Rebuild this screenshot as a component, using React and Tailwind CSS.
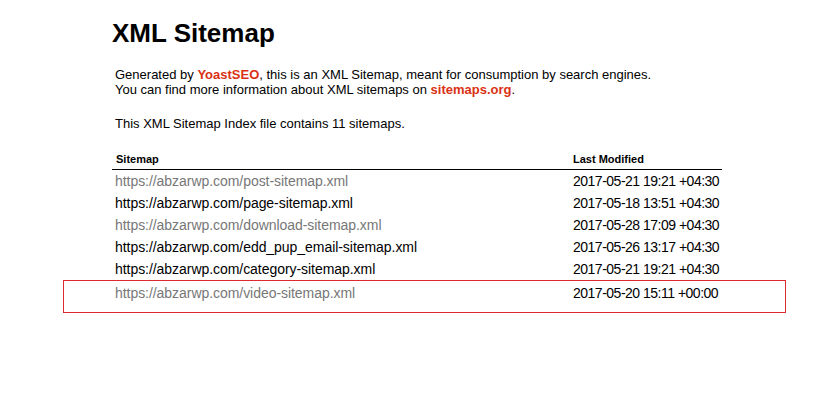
export default function App() {
  const rows = [
    { url: "https://abzarwp.com/post-sitemap.xml", date: "2017-05-21 19:21 +04:30", visited: true },
    { url: "https://abzarwp.com/page-sitemap.xml", date: "2017-05-18 13:51 +04:30", visited: false },
    { url: "https://abzarwp.com/download-sitemap.xml", date: "2017-05-28 17:09 +04:30", visited: true },
    { url: "https://abzarwp.com/edd_pup_email-sitemap.xml", date: "2017-05-26 13:17 +04:30", visited: false },
    { url: "https://abzarwp.com/category-sitemap.xml", date: "2017-05-21 19:21 +04:30", visited: false },
  ];
  return (
    <div className="relative w-[830px] h-[406px] bg-white text-black overflow-hidden" style={{ fontFamily: '"Liberation Sans", Arial, sans-serif' }}>
      <div className="pl-[112px] pt-[18px]">
        <h1 className="text-[26px] leading-[30px] font-bold m-0">XML Sitemap</h1>
        <div className="pl-[3px] mt-[19px] text-[13px] leading-[15px]">
          <p>
            Generated by <a className="text-[#da3114] font-bold">YoastSEO</a>, this is an XML Sitemap, meant for consumption by search engines.
            <br />
            You can find more information about XML sitemaps on <a className="text-[#da3114] font-bold">sitemaps.org</a>.
          </p>
          <p className="mt-[19px]">This XML Sitemap Index file contains 11 sitemaps.</p>
        </div>
        <div className="mt-[22px] w-[610px]">
          <div className="flex border-b border-black pb-[3px] text-[11px] leading-[13px] font-bold">
            <div className="w-[458px] pl-[4px] whitespace-nowrap">Sitemap</div>
            <div className="w-[152px] pl-[3px] whitespace-nowrap">Last Modified</div>
          </div>
          {rows.map((r) => (
            <div key={r.url} className="flex text-[14px] leading-[16px] py-[3px]">
              <div className={"w-[458px] pl-[3px] whitespace-nowrap tracking-[-0.05px] " + (r.visited ? "text-[#777777]" : "text-black")}>{r.url}</div>
              <div className="w-[152px] pl-[3px] text-black whitespace-nowrap tracking-[-0.5px]">{r.date}</div>
            </div>
          ))}
          <div className="flex text-[14px] leading-[16px] pt-[5px] pb-[3px]">
            <div className="w-[458px] pl-[3px] text-[#777777] whitespace-nowrap tracking-[-0.05px]">https://abzarwp.com/video-sitemap.xml</div>
            <div className="w-[152px] pl-[3px] text-black whitespace-nowrap tracking-[-0.5px]">2017-05-20 15:11 +00:00</div>
          </div>
        </div>
      </div>
      <div className="absolute left-[63px] top-[280px] w-[723px] h-[33px] border border-[#dc2a30]" />
    </div>
  );
}
